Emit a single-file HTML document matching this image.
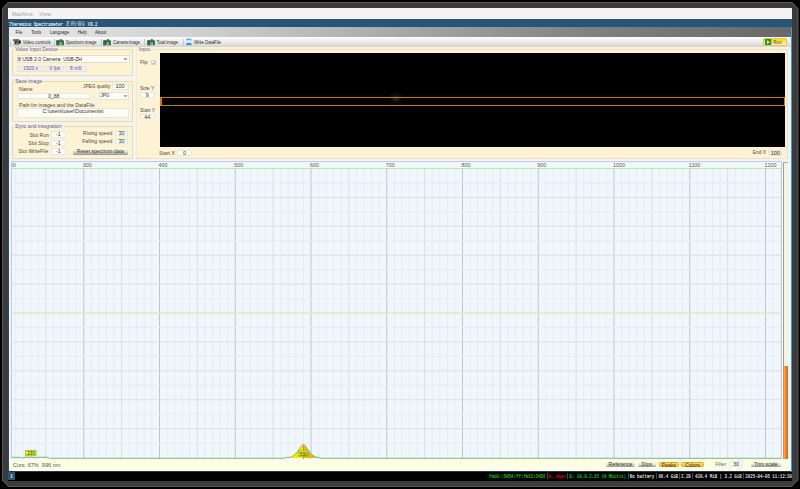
<!DOCTYPE html>
<html><head><meta charset="utf-8">
<style>
*{box-sizing:border-box;margin:0;padding:0}
html,body{width:800px;height:489px;overflow:hidden;background:#000}
body{position:relative;font-family:"Liberation Sans",sans-serif;color:#333}
.a{position:absolute;white-space:nowrap}
.t{position:absolute;white-space:nowrap;line-height:1}
.gb{position:absolute;background:#fdf2d2;border:1px solid #e8dcc0;border-radius:1px}
.gbt{position:absolute;font-size:5.3px;color:#4646a8;background:#fdf2d2;padding:0 1px;line-height:1}
.fld{position:absolute;background:#fffbf0;border:0.6px solid #d8e8e0;font-size:5.3px;color:#333;text-align:center;line-height:1}
.lbl{position:absolute;font-size:5.1px;color:#555;line-height:1;white-space:nowrap}
.btn{position:absolute;border-radius:1.5px;font-size:5.3px;color:#333;text-align:center;line-height:1;white-space:nowrap}
.gbtn{background:linear-gradient(#f6f6ee,#e4e4d8 50%,#c0beb2 80%,#8e8c84);}
.obtn{background:linear-gradient(#ffe070,#ffc030);border:0.7px solid #f0a020}
.sep{position:absolute;width:1px;background:#c8c8c8}
</style></head><body>

<!-- frame -->
<svg class="a" style="left:0;top:0" width="800" height="489">
<polygon points="8,2 792,2 798.5,8.5 798.5,480 791.5,487 8.5,487 2,480.5 2,8.5" fill="#5a5a5a"/>
<polygon points="8.5,3 791.5,3 797.5,9 797.5,479.5 791,486 9,486 3,480 3,9" fill="#3b3b3b"/>
</svg>

<!-- machine bar -->
<div class="a" style="left:8px;top:8px;width:784px;height:11px;background:#f5f4f2"></div>
<div class="t" style="left:11.7px;top:12px;font-size:5.6px;color:#a4a4a4">Machine</div>
<div class="t" style="left:39.3px;top:12px;font-size:5.6px;color:#a4a4a4">View</div>

<!-- title bar -->
<div class="a" style="left:8px;top:19px;width:784px;height:8px;background:#285577"></div>
<div class="t" style="left:9.3px;top:20.6px;font-family:'Liberation Mono';font-size:4.07px;color:#dfe8f0;transform:scaleY(1.35);transform-origin:0 0;-webkit-text-stroke:0.12px #dfe8f0">Theremino Spectrometer <svg style="display:inline-block;vertical-align:-0.3px;margin:0 0.6px 0 0.3px" width="19" height="3.8" viewBox="0 0 19 3.8"><g stroke="#dfe8f0" stroke-width="0.45" fill="none" opacity="0.85">
<path d="M0.3 0.4 H3.3 M0.6 1.2 H3 M0.6 2 H3 M0.3 3.4 H3.4 M1.8 0.2 V3.6 M0.5 2.6 L1 3.2"/>
<path d="M4.2 0.3 L4.8 1.2 M4.3 1.6 H5.3 V3.5 M5.8 0.4 H7.8 V3.5 M5.8 1.8 H7.6 M6.2 0.4 V3.5"/>
<path d="M9.8 0.2 V3.6 M8.5 1.2 L9 2.6 M11.2 1.2 L10.7 2.6 M9.3 3.6 H10"/>
<path d="M12 0.4 H15 M12.4 0.4 V3.6 M13.4 1.2 H14.8 V3 H13.4 Z M13.4 2.1 H14.8 M12 3.6 H15.1"/>
<path d="M15.8 0.4 V3.6 M16.6 0.3 H18.6 M16.6 1.4 H18.4 M17.5 1.4 V3.6 M16.7 2.4 L18.7 3.6 M18.6 2.3 L16.6 3.6"/>
</g></svg> V8.2</div>

<!-- app window -->
<div class="a" style="left:8px;top:27px;width:784px;height:445px;background:#eef4fa"></div>
<div class="a" style="left:8px;top:27px;width:1px;height:445px;background:#1f4d73"></div>
<div class="a" style="left:791px;top:27px;width:1px;height:445px;background:#3d9ae0"></div>

<!-- menu bar -->
<div class="a" style="left:9px;top:27px;width:782px;height:10px;background:linear-gradient(90deg,#e8e8e8 0%,#cfcfcf 25%,#a8a8a8 50%,#808080 75%,#686868 100%)"></div>
<div class="t" style="left:15.5px;top:30.2px;font-size:4.3px;color:#2a2a2a;transform:scaleY(1.22);transform-origin:0 0">File</div>
<div class="t" style="left:31.2px;top:30.2px;font-size:4.3px;color:#2a2a2a;transform:scaleY(1.22);transform-origin:0 0">Tools</div>
<div class="t" style="left:50px;top:30.2px;font-size:4.3px;color:#2a2a2a;transform:scaleY(1.22);transform-origin:0 0">Language</div>
<div class="t" style="left:77.7px;top:30.2px;font-size:4.3px;color:#2a2a2a;transform:scaleY(1.22);transform-origin:0 0">Help</div>
<div class="t" style="left:95px;top:30.2px;font-size:4.3px;color:#2a2a2a;transform:scaleY(1.22);transform-origin:0 0">About</div>

<!-- toolbar -->
<div class="a" style="left:9px;top:37px;width:782px;height:9.5px;background:linear-gradient(#fdfdfd,#e6e6e6 60%,#d4d4d4)"></div>

<!-- toolbar items -->
<div class="sep" style="left:10.3px;top:38.8px;height:6.5px;width:0.8px;background:#cfcfcf"></div>
<svg class="a" style="left:13px;top:38.6px" width="8" height="6" viewBox="0 0 8 6">
 <rect x="0" y="0.2" width="6" height="1.7" fill="#4a4a4a"/>
 <path d="M0.8 0.2 L1.6 1.9 M2.4 0.2 L3.2 1.9 M4 0.2 L4.8 1.9" stroke="#9a9a9a" stroke-width="0.45"/>
 <rect x="1.4" y="1.9" width="4.6" height="3.6" fill="#3a3a3a"/>
 <rect x="2.8" y="3.6" width="2.4" height="1.6" fill="#a89a20"/>
 <rect x="5.3" y="1.6" width="0.6" height="2" fill="#d08080"/>
 <rect x="6" y="1.4" width="1.8" height="3.2" fill="#222"/>
</svg>
<div class="t" style="left:22.7px;top:40.8px;font-size:4.45px;color:#333">Video controls</div>
<div class="sep" style="left:54.2px;top:38.5px;height:7px;width:0.8px"></div>
<svg class="a" style="left:56px;top:38.5px" width="9" height="7" viewBox="0 0 9 7">
 <rect x="0.3" y="1.3" width="7.6" height="5" rx="0.5" fill="#2f6a3e"/>
 <rect x="0.3" y="1.3" width="2.2" height="5" fill="#2a6a55" opacity="0.7"/>
 <rect x="3.8" y="0.3" width="2.2" height="1.3" rx="0.3" fill="#3a5a3a"/>
 <rect x="3.4" y="3.4" width="2.6" height="2.4" fill="#b8c8a8"/>
 <rect x="3.9" y="3.9" width="1.6" height="1.3" fill="#7a9a78"/>
</svg>
<div class="t" style="left:65.7px;top:40.8px;font-size:4.45px;color:#333;letter-spacing:-0.114px">Spectrum image</div>
<div class="sep" style="left:100.5px;top:38.5px;height:7px;width:0.8px"></div>
<svg class="a" style="left:103px;top:38.5px" width="9" height="7" viewBox="0 0 9 7">
 <rect x="0.3" y="1.3" width="7.6" height="5" rx="0.5" fill="#2f6a3e"/>
 <rect x="0.3" y="1.3" width="2.2" height="5" fill="#2a6a55" opacity="0.7"/>
 <rect x="3.8" y="0.3" width="2.2" height="1.3" rx="0.3" fill="#3a5a3a"/>
 <rect x="3.4" y="3.4" width="2.6" height="2.4" fill="#b8c8a8"/>
 <rect x="3.9" y="3.9" width="1.6" height="1.3" fill="#7a9a78"/>
</svg>
<div class="t" style="left:113px;top:40.8px;font-size:4.45px;color:#333;letter-spacing:-0.198px">Camera image</div>
<div class="sep" style="left:143.5px;top:38.5px;height:7px;width:0.8px"></div>
<svg class="a" style="left:146.8px;top:38.5px" width="9" height="7" viewBox="0 0 9 7">
 <rect x="0.3" y="1.3" width="7.6" height="5" rx="0.5" fill="#2f6a3e"/>
 <rect x="0.3" y="1.3" width="2.2" height="5" fill="#2a6a55" opacity="0.7"/>
 <rect x="3.8" y="0.3" width="2.2" height="1.3" rx="0.3" fill="#3a5a3a"/>
 <rect x="3.4" y="3.4" width="2.6" height="2.4" fill="#b8c8a8"/>
 <rect x="3.9" y="3.9" width="1.6" height="1.3" fill="#7a9a78"/>
</svg>
<div class="t" style="left:156.5px;top:40.8px;font-size:4.45px;color:#333;letter-spacing:-0.114px">Total image</div>
<div class="sep" style="left:183px;top:38.5px;height:7px;width:0.8px"></div>
<svg class="a" style="left:185.5px;top:38px" width="6" height="8" viewBox="0 0 6 8">
 <rect x="0.4" y="1" width="5" height="6" fill="#d8ecf8"/>
 <path d="M0.3 0.8 Q2.8 -0.2 5.5 1 L5.5 2.4 Q2.8 1.6 0.3 2.6Z" fill="#5ab4e8"/>
 <path d="M0.3 5.2 Q2.8 4.4 5.5 5.4 L5.5 7.3 Q2.8 6.6 0.3 7.2Z" fill="#3c8cd0"/>
</svg>
<div class="t" style="left:194px;top:40.8px;font-size:4.45px;color:#333;letter-spacing:-0.079px">Write DataFile</div>

<!-- Run button -->
<div class="a" style="left:763px;top:37.5px;width:24px;height:8.7px;border:0.7px solid #f0c060;border-radius:1px;background:linear-gradient(#ffd800,#ffe860 55%,#fff6c8)"></div>
<svg class="a" style="left:765px;top:38.8px" width="6.5" height="6.5" viewBox="0 0 6.5 6.5">
 <rect x="0" y="0" width="6.3" height="6.3" fill="#1a9a2a"/>
 <path d="M2 1.2 L5 3.15 L2 5.1Z" fill="#e8ffe8"/>
</svg>
<div class="t" style="left:773.3px;top:40.6px;font-size:4.6px;color:#444">Run</div>


<!-- panels -->
<div class="a" style="left:132.7px;top:46.5px;width:2.6px;height:113px;background:#eef6fc"></div>
<div class="a" style="left:11.30px;top:46.60px;width:121.40px;height:29.00px;background:#fdf2d3"></div>
<div class="a" style="left:11.50px;top:48.80px;width:121.20px;height:26.80px;border:0.8px solid #e3dac4"></div>
<div class="a" style="left:14.20px;top:47.30px;width:44.80px;height:4px;background:#fdf2d3"></div>
<div class="t" style="left:15.20px;top:47.05px;font-size:5.1px;color:#5252aa;">Video Input Device</div>
<div class="a" style="left:16.50px;top:54.50px;width:113.00px;height:8.80px;background:#fffcf5;border:0.5px solid #e6dfcc"></div>
<div class="t" style="left:18.00px;top:56.58px;font-size:5.05px;color:#2a2a2a;">8 USB 2.0 Camera: USB-ZH</div>
<svg class="a" style="left:122.8px;top:57.6px" width="5" height="3"><path d="M0.3 0.3 L4.5 0.3 L2.4 2.6Z" fill="#8a8a8a"/></svg>
<div class="a" style="left:16.50px;top:66.00px;width:28.40px;height:5.80px;background:#efefeb;border:0.5px solid #e4e4de"></div>
<div class="t" style="left:16.50px;width:28.40px;text-align:center;top:66.65px;font-size:4.9px;color:#5050b0;">1920 x</div>
<div class="a" style="left:46.20px;top:66.00px;width:17.40px;height:5.80px;background:#efefeb;border:0.5px solid #e4e4de"></div>
<div class="t" style="left:46.20px;width:17.40px;text-align:center;top:66.65px;font-size:4.9px;color:#5050b0;">0 fps</div>
<div class="a" style="left:64.80px;top:66.00px;width:22.00px;height:5.80px;background:#efefeb;border:0.5px solid #e4e4de"></div>
<div class="t" style="left:64.80px;width:22.00px;text-align:center;top:66.65px;font-size:4.9px;color:#5050b0;">8 mS</div>
<div class="a" style="left:11.30px;top:78.55px;width:121.40px;height:42.95px;background:#fdf2d3"></div>
<div class="a" style="left:11.50px;top:80.75px;width:121.20px;height:40.75px;border:0.8px solid #e3dac4"></div>
<div class="a" style="left:14.20px;top:79.25px;width:28.80px;height:4px;background:#fdf2d3"></div>
<div class="t" style="left:15.20px;top:78.95px;font-size:5.1px;color:#5252aa;">Save image</div>
<div class="t" style="left:19.00px;top:87.07px;font-size:5.05px;color:#4a4a4a;">Name</div>
<div class="t" style="left:83.00px;top:84.53px;font-size:4.75px;color:#4a4a4a;">JPEG quality</div>
<div class="a" style="left:111.50px;top:83.25px;width:17.00px;height:6.95px;background:#fffbf2;border:0.5px solid #d9ecec"></div>
<div class="t" style="left:111.50px;width:17.00px;text-align:center;top:84.05px;font-size:5.5px;color:#333;">100</div>
<div class="a" style="left:16.50px;top:93.00px;width:74.50px;height:5.50px;background:#fffbf2;border:0.5px solid #d9ecec"></div>
<div class="t" style="left:16.50px;width:74.50px;text-align:center;top:93.38px;font-size:5.05px;color:#333;margin-top:0.4px">0_88</div>
<div class="t" style="left:94.00px;top:93.67px;font-size:5.05px;color:#444;">.</div>
<div class="a" style="left:99.30px;top:91.80px;width:29.70px;height:8.40px;background:#fffcf5;border:0.5px solid #d6e8e4"></div>
<div class="t" style="left:100.50px;top:93.70px;font-size:4.6px;color:#333;">JPG</div>
<svg class="a" style="left:122.6px;top:95px" width="5" height="3"><path d="M0.3 0.3 L4.6 0.3 L2.45 2.6Z" fill="#9a9a9a"/></svg>
<div class="t" style="left:19.00px;top:102.61px;font-size:5.18px;color:#4a4a4a;">Path for images and the DataFile</div>
<div class="a" style="left:17.00px;top:107.50px;width:112.00px;height:10.20px;background:#fffbf2;border:0.5px solid #d9ecec"></div>
<div class="t" style="left:17.00px;width:112.00px;text-align:center;top:108.95px;font-size:5.3px;color:#333;">C:\users\user\Documents\</div>
<div class="a" style="left:11.30px;top:123.80px;width:121.40px;height:35.10px;background:#fdf2d3"></div>
<div class="a" style="left:11.50px;top:126.00px;width:121.20px;height:32.90px;border:0.8px solid #e3dac4"></div>
<div class="a" style="left:14.10px;top:124.50px;width:50.00px;height:4px;background:#fdf2d3"></div>
<div class="t" style="left:15.10px;top:123.75px;font-size:5.1px;color:#5252aa;">Sync and integration</div>
<div class="t" style="left:-11.25px;width:60px;text-align:right;top:132.57px;font-size:5.05px;color:#4a4a4a;">Slot Run</div>
<div class="t" style="left:-11.25px;width:60px;text-align:right;top:140.88px;font-size:5.05px;color:#4a4a4a;">Slot Stop</div>
<div class="t" style="left:-11.80px;width:60px;text-align:right;top:148.72px;font-size:5.05px;color:#4a4a4a;">Slot WriteFile</div>
<div class="a" style="left:51.00px;top:131.40px;width:14.60px;height:6.70px;background:#fffbf2;border:0.5px solid #d9ecec"></div>
<div class="t" style="left:51.00px;width:14.60px;text-align:center;top:132.15px;font-size:5.4px;color:#333;">-1</div>
<div class="a" style="left:51.00px;top:140.00px;width:14.60px;height:6.40px;background:#fffbf2;border:0.5px solid #d9ecec"></div>
<div class="t" style="left:51.00px;width:14.60px;text-align:center;top:140.60px;font-size:5.4px;color:#333;">-1</div>
<div class="a" style="left:51.00px;top:148.25px;width:14.60px;height:6.35px;background:#fffbf2;border:0.5px solid #d9ecec"></div>
<div class="t" style="left:51.00px;width:14.60px;text-align:center;top:148.83px;font-size:5.4px;color:#333;">-1</div>
<div class="t" style="left:52.30px;width:60px;text-align:right;top:130.78px;font-size:5.05px;color:#4a4a4a;">Rising speed</div>
<div class="t" style="left:52.30px;width:60px;text-align:right;top:138.88px;font-size:5.05px;color:#4a4a4a;">Falling speed</div>
<div class="a" style="left:115.10px;top:130.50px;width:12.60px;height:5.70px;background:#fffbf2;border:0.5px solid #d9ecec"></div>
<div class="t" style="left:115.10px;width:12.60px;text-align:center;top:130.75px;font-size:5.4px;color:#333;">30</div>
<div class="a" style="left:115.10px;top:138.60px;width:12.60px;height:5.70px;background:#fffbf2;border:0.5px solid #d9ecec"></div>
<div class="t" style="left:115.10px;width:12.60px;text-align:center;top:138.85px;font-size:5.4px;color:#333;">30</div>
<div class="a" style="left:72.85px;top:148.4px;width:54.85px;height:6.5px;border-radius:1.2px;background:linear-gradient(#fbfbe8,#e8e8d4 45%,#b8b6a8 80%,#8e8c82)"></div>
<div class="t" style="left:72.85px;width:54.85px;text-align:center;top:148.75px;font-size:5.1px;color:#333;">Reset spectrum data</div>
<div class="a" style="left:135.3px;top:46.5px;width:652.8px;height:112.3px;background:#fdf2d3"></div>
<div class="a" style="left:135.5px;top:49.1px;width:652.4px;height:109.7px;border:0.8px solid #ebe1c8;border-left-color:#f4ead0"></div>
<div class="a" style="left:138px;top:47.3px;width:13px;height:4px;background:#fdf2d3"></div>
<div class="t" style="left:139.00px;top:48.12px;font-size:4.95px;color:#5252aa;">Input</div>
<div class="t" style="left:140.00px;top:61.05px;font-size:4.7px;color:#4a4a4a;">Flip</div>
<div class="a" style="left:151px;top:59.5px;width:5.2px;height:5.2px;background:#f6f6f2;border:0.5px solid #d6d6ce"></div>
<svg class="a" style="left:151px;top:59.5px" width="6" height="6"><path d="M1.3 2.9 L2.4 4.1 L4.4 1.3" stroke="#777" stroke-width="0.6" fill="none"/></svg>
<div class="t" style="left:140.00px;top:86.73px;font-size:4.95px;color:#4a4a4a;">Size Y</div>
<div class="a" style="left:140.00px;top:92.00px;width:14.60px;height:5.60px;background:#fffbf2;border:0.5px solid #d9ecec"></div>
<div class="t" style="left:140.00px;width:14.60px;text-align:center;top:93.25px;font-size:5.3px;color:#333;">9</div>
<div class="t" style="left:140.00px;top:108.93px;font-size:4.95px;color:#4a4a4a;">Start Y</div>
<div class="a" style="left:140.00px;top:114.00px;width:14.60px;height:5.20px;background:#fffbf2;border:0.5px solid #d9ecec"></div>
<div class="t" style="left:140.00px;width:14.60px;text-align:center;top:114.95px;font-size:5.3px;color:#333;">44</div>
<div class="t" style="left:159.10px;top:150.70px;font-size:5.2px;color:#4a4a4a;">Start X</div>
<div class="a" style="left:177.20px;top:150.00px;width:14.40px;height:6.20px;background:#fffbf2;border:0.5px solid #d9ecec"></div>
<div class="t" style="left:177.20px;width:14.40px;text-align:center;top:150.60px;font-size:5.4px;color:#444;">0</div>
<div class="t" style="left:752.80px;top:150.67px;font-size:4.85px;color:#4a4a4a;">End X</div>
<div class="a" style="left:768.10px;top:150.00px;width:14.40px;height:6.25px;background:#fde6c4;border:0.5px solid #dde8e0"></div>
<div class="t" style="left:768.10px;width:14.40px;text-align:center;top:151.15px;font-size:5.5px;color:#333;">100</div>
<div class="a" style="left:159.6px;top:52.8px;width:625.4px;height:94.2px;background:#000;overflow:hidden">
  <div class="a" style="left:226.4px;top:38.2px;width:20px;height:15px;background:radial-gradient(ellipse at center,rgba(60,70,62,0.7) 0%,rgba(30,35,30,0.3) 35%,rgba(0,0,0,0) 70%)"></div>
  <div class="a" style="left:0.3px;top:44.1px;width:625px;height:9.3px;border:1.4px solid #d07800;border-left-width:2px"></div>
</div>
<!-- /panels -->












<!-- chart -->
<svg class="a" style="left:0;top:0" width="800" height="489">
<rect x="11" y="161" width="771" height="298" fill="#eff6fd"/>
<rect x="11" y="161" width="771" height="1" fill="#c8ccd2"/>
<rect x="11" y="161" width="1" height="298" fill="#c8ccd2"/>
<rect x="781" y="161" width="1" height="298" fill="#c8ccd2"/>
<defs><clipPath id="cp"><rect x="12" y="162" width="769" height="297"/></clipPath></defs>
<g clip-path="url(#cp)">
<rect x="7.50" y="168" width="1" height="291" fill="#c2c5ca"/>
<rect x="15.08" y="168" width="1" height="291" fill="#e9ecef"/>
<rect x="22.65" y="168" width="1" height="291" fill="#e9ecef"/>
<rect x="30.22" y="168" width="1" height="291" fill="#e9ecef"/>
<rect x="37.80" y="168" width="1" height="291" fill="#e9ecef"/>
<rect x="45.38" y="168" width="1" height="291" fill="#dcdfe3"/>
<rect x="52.95" y="168" width="1" height="291" fill="#e9ecef"/>
<rect x="60.53" y="168" width="1" height="291" fill="#e9ecef"/>
<rect x="68.10" y="168" width="1" height="291" fill="#e9ecef"/>
<rect x="75.68" y="168" width="1" height="291" fill="#e9ecef"/>
<rect x="83.25" y="168" width="1" height="291" fill="#c2c5ca"/>
<rect x="90.83" y="168" width="1" height="291" fill="#e9ecef"/>
<rect x="98.40" y="168" width="1" height="291" fill="#e9ecef"/>
<rect x="105.97" y="168" width="1" height="291" fill="#e9ecef"/>
<rect x="113.55" y="168" width="1" height="291" fill="#e9ecef"/>
<rect x="121.12" y="168" width="1" height="291" fill="#dcdfe3"/>
<rect x="128.70" y="168" width="1" height="291" fill="#e9ecef"/>
<rect x="136.28" y="168" width="1" height="291" fill="#e9ecef"/>
<rect x="143.85" y="168" width="1" height="291" fill="#e9ecef"/>
<rect x="151.43" y="168" width="1" height="291" fill="#e9ecef"/>
<rect x="159.00" y="168" width="1" height="291" fill="#c2c5ca"/>
<rect x="166.57" y="168" width="1" height="291" fill="#e9ecef"/>
<rect x="174.15" y="168" width="1" height="291" fill="#e9ecef"/>
<rect x="181.72" y="168" width="1" height="291" fill="#e9ecef"/>
<rect x="189.30" y="168" width="1" height="291" fill="#e9ecef"/>
<rect x="196.88" y="168" width="1" height="291" fill="#dcdfe3"/>
<rect x="204.45" y="168" width="1" height="291" fill="#e9ecef"/>
<rect x="212.03" y="168" width="1" height="291" fill="#e9ecef"/>
<rect x="219.60" y="168" width="1" height="291" fill="#e9ecef"/>
<rect x="227.18" y="168" width="1" height="291" fill="#e9ecef"/>
<rect x="234.75" y="168" width="1" height="291" fill="#c2c5ca"/>
<rect x="242.32" y="168" width="1" height="291" fill="#e9ecef"/>
<rect x="249.90" y="168" width="1" height="291" fill="#e9ecef"/>
<rect x="257.48" y="168" width="1" height="291" fill="#e9ecef"/>
<rect x="265.05" y="168" width="1" height="291" fill="#e9ecef"/>
<rect x="272.62" y="168" width="1" height="291" fill="#dcdfe3"/>
<rect x="280.20" y="168" width="1" height="291" fill="#e9ecef"/>
<rect x="287.77" y="168" width="1" height="291" fill="#e9ecef"/>
<rect x="295.35" y="168" width="1" height="291" fill="#e9ecef"/>
<rect x="302.92" y="168" width="1" height="291" fill="#e9ecef"/>
<rect x="310.50" y="168" width="1" height="291" fill="#c2c5ca"/>
<rect x="318.07" y="168" width="1" height="291" fill="#e9ecef"/>
<rect x="325.65" y="168" width="1" height="291" fill="#e9ecef"/>
<rect x="333.23" y="168" width="1" height="291" fill="#e9ecef"/>
<rect x="340.80" y="168" width="1" height="291" fill="#e9ecef"/>
<rect x="348.38" y="168" width="1" height="291" fill="#dcdfe3"/>
<rect x="355.95" y="168" width="1" height="291" fill="#e9ecef"/>
<rect x="363.52" y="168" width="1" height="291" fill="#e9ecef"/>
<rect x="371.10" y="168" width="1" height="291" fill="#e9ecef"/>
<rect x="378.67" y="168" width="1" height="291" fill="#e9ecef"/>
<rect x="386.25" y="168" width="1" height="291" fill="#c2c5ca"/>
<rect x="393.82" y="168" width="1" height="291" fill="#e9ecef"/>
<rect x="401.40" y="168" width="1" height="291" fill="#e9ecef"/>
<rect x="408.98" y="168" width="1" height="291" fill="#e9ecef"/>
<rect x="416.55" y="168" width="1" height="291" fill="#e9ecef"/>
<rect x="424.12" y="168" width="1" height="291" fill="#dcdfe3"/>
<rect x="431.70" y="168" width="1" height="291" fill="#e9ecef"/>
<rect x="439.27" y="168" width="1" height="291" fill="#e9ecef"/>
<rect x="446.85" y="168" width="1" height="291" fill="#e9ecef"/>
<rect x="454.42" y="168" width="1" height="291" fill="#e9ecef"/>
<rect x="462.00" y="168" width="1" height="291" fill="#c2c5ca"/>
<rect x="469.57" y="168" width="1" height="291" fill="#e9ecef"/>
<rect x="477.15" y="168" width="1" height="291" fill="#e9ecef"/>
<rect x="484.72" y="168" width="1" height="291" fill="#e9ecef"/>
<rect x="492.30" y="168" width="1" height="291" fill="#e9ecef"/>
<rect x="499.88" y="168" width="1" height="291" fill="#dcdfe3"/>
<rect x="507.45" y="168" width="1" height="291" fill="#e9ecef"/>
<rect x="515.02" y="168" width="1" height="291" fill="#e9ecef"/>
<rect x="522.60" y="168" width="1" height="291" fill="#e9ecef"/>
<rect x="530.17" y="168" width="1" height="291" fill="#e9ecef"/>
<rect x="537.75" y="168" width="1" height="291" fill="#c2c5ca"/>
<rect x="545.33" y="168" width="1" height="291" fill="#e9ecef"/>
<rect x="552.90" y="168" width="1" height="291" fill="#e9ecef"/>
<rect x="560.47" y="168" width="1" height="291" fill="#e9ecef"/>
<rect x="568.05" y="168" width="1" height="291" fill="#e9ecef"/>
<rect x="575.62" y="168" width="1" height="291" fill="#dcdfe3"/>
<rect x="583.20" y="168" width="1" height="291" fill="#e9ecef"/>
<rect x="590.77" y="168" width="1" height="291" fill="#e9ecef"/>
<rect x="598.35" y="168" width="1" height="291" fill="#e9ecef"/>
<rect x="605.92" y="168" width="1" height="291" fill="#e9ecef"/>
<rect x="613.50" y="168" width="1" height="291" fill="#c2c5ca"/>
<rect x="621.08" y="168" width="1" height="291" fill="#e9ecef"/>
<rect x="628.65" y="168" width="1" height="291" fill="#e9ecef"/>
<rect x="636.22" y="168" width="1" height="291" fill="#e9ecef"/>
<rect x="643.80" y="168" width="1" height="291" fill="#e9ecef"/>
<rect x="651.38" y="168" width="1" height="291" fill="#dcdfe3"/>
<rect x="658.95" y="168" width="1" height="291" fill="#e9ecef"/>
<rect x="666.52" y="168" width="1" height="291" fill="#e9ecef"/>
<rect x="674.10" y="168" width="1" height="291" fill="#e9ecef"/>
<rect x="681.67" y="168" width="1" height="291" fill="#e9ecef"/>
<rect x="689.25" y="168" width="1" height="291" fill="#c2c5ca"/>
<rect x="696.82" y="168" width="1" height="291" fill="#e9ecef"/>
<rect x="704.40" y="168" width="1" height="291" fill="#e9ecef"/>
<rect x="711.97" y="168" width="1" height="291" fill="#e9ecef"/>
<rect x="719.55" y="168" width="1" height="291" fill="#e9ecef"/>
<rect x="727.12" y="168" width="1" height="291" fill="#dcdfe3"/>
<rect x="734.70" y="168" width="1" height="291" fill="#e9ecef"/>
<rect x="742.27" y="168" width="1" height="291" fill="#e9ecef"/>
<rect x="749.85" y="168" width="1" height="291" fill="#e9ecef"/>
<rect x="757.42" y="168" width="1" height="291" fill="#e9ecef"/>
<rect x="765.00" y="168" width="1" height="291" fill="#c2c5ca"/>
<rect x="772.57" y="168" width="1" height="291" fill="#e9ecef"/>
<rect x="780.15" y="168" width="1" height="291" fill="#e9ecef"/>
<rect x="787.72" y="168" width="1" height="291" fill="#e9ecef"/>
<rect x="11" y="182.46" width="771" height="1" fill="#e8eaed"/>
<rect x="11" y="196.91" width="771" height="1" fill="#dcdfe3"/>
<rect x="11" y="211.37" width="771" height="1" fill="#e8eaed"/>
<rect x="11" y="225.82" width="771" height="1" fill="#dcdfe3"/>
<rect x="11" y="240.28" width="771" height="1" fill="#e8eaed"/>
<rect x="11" y="254.73" width="771" height="1" fill="#dcdfe3"/>
<rect x="11" y="269.19" width="771" height="1" fill="#e8eaed"/>
<rect x="11" y="283.64" width="771" height="1" fill="#dcdfe3"/>
<rect x="11" y="298.10" width="771" height="1" fill="#e8eaed"/>
<rect x="11" y="312.35" width="771" height="1.4" fill="#d8ecc8"/>
<rect x="11" y="327.00" width="771" height="1" fill="#e8eaed"/>
<rect x="11" y="341.46" width="771" height="1" fill="#dcdfe3"/>
<rect x="11" y="355.91" width="771" height="1" fill="#e8eaed"/>
<rect x="11" y="370.37" width="771" height="1" fill="#dcdfe3"/>
<rect x="11" y="384.82" width="771" height="1" fill="#e8eaed"/>
<rect x="11" y="399.28" width="771" height="1" fill="#dcdfe3"/>
<rect x="11" y="413.74" width="771" height="1" fill="#e8eaed"/>
<rect x="11" y="428.19" width="771" height="1" fill="#dcdfe3"/>
<rect x="11" y="442.64" width="771" height="1" fill="#e8eaed"/>
<rect x="11" y="168" width="771" height="1" fill="#c6e3a4"/>
<text x="7.10" y="166.9" font-family="Liberation Sans" font-size="5.3" fill="#5a5a5a">200</text>
<text x="82.85" y="166.9" font-family="Liberation Sans" font-size="5.3" fill="#5a5a5a">300</text>
<text x="158.60" y="166.9" font-family="Liberation Sans" font-size="5.3" fill="#5a5a5a">400</text>
<text x="234.35" y="166.9" font-family="Liberation Sans" font-size="5.3" fill="#5a5a5a">500</text>
<text x="310.10" y="166.9" font-family="Liberation Sans" font-size="5.3" fill="#5a5a5a">600</text>
<text x="385.85" y="166.9" font-family="Liberation Sans" font-size="5.3" fill="#5a5a5a">700</text>
<text x="461.60" y="166.9" font-family="Liberation Sans" font-size="5.3" fill="#5a5a5a">800</text>
<text x="537.35" y="166.9" font-family="Liberation Sans" font-size="5.3" fill="#5a5a5a">900</text>
<text x="613.10" y="166.9" font-family="Liberation Sans" font-size="5.3" fill="#5a5a5a">1000</text>
<text x="688.85" y="166.9" font-family="Liberation Sans" font-size="5.3" fill="#5a5a5a">1100</text>
<text x="764.60" y="166.9" font-family="Liberation Sans" font-size="5.3" fill="#5a5a5a">1200</text>
</g>
</svg>
<!-- /chart -->

<!-- data -->
<svg class="a" style="left:0;top:0" width="800" height="489">
 <defs>
  <linearGradient id="pk" x1="0" x2="1" y1="0" y2="0">
   <stop offset="0" stop-color="#f0f000"/><stop offset="0.49" stop-color="#ffe400"/><stop offset="0.51" stop-color="#ffb800"/><stop offset="1" stop-color="#ffa000"/>
  </linearGradient>
 </defs>
 <path d="M287.5 458 C291.5 457.6 294.5 455.5 297.3 452 C299.8 448.6 301.8 444.6 303.4 444.4 C305 444.6 307 448.6 309.5 452 C312.3 455.5 315.3 457.6 319.3 458 Z" fill="url(#pk)"/>
 <path d="M12 457.3 L20 457.4 L22.5 458 L25 457.3 L33 457.3 L35 457.9 L37 457.3 L47 457.2 L49.5 458.3 L284 458.3 L285.5 457.4 L288 457.6 C291.5 457.5 294.5 455.5 297.3 452 C299.8 448.6 301.8 444.6 303.4 444.4 C305 444.6 307 448.6 309.5 452 C312.3 455.5 315.3 457.5 319 457.5 L321 458.3 L781 458.3" fill="none" stroke="#74be74" stroke-width="1"/>
 <line x1="303.4" y1="445.5" x2="303.4" y2="459" stroke="#ff5a00" stroke-width="0.7"/>
 <rect x="25.6" y="450.3" width="10.4" height="5.5" fill="#f2f200" stroke="#66bb55" stroke-width="0.7"/>
 <text x="26.9" y="455.1" font-family="Liberation Sans" font-size="4.9" fill="#333">230</text>
 <rect x="298.3" y="450.8" width="10.3" height="5.4" fill="#f2f000" stroke="#66bb55" stroke-width="0.7"/>
 <text x="299.5" y="455.5" font-family="Liberation Sans" font-size="4.9" fill="#333">590</text>
</svg>

<!-- right slider -->
<div class="a" style="left:783px;top:161.5px;width:5px;height:297.5px;background:#f4f4dc;border-left:1px solid #a0a0a0;border-top:1px solid #b0b0a8"></div>
<div class="a" style="left:784px;top:366px;width:4px;height:93px;background:linear-gradient(90deg,#ffb060,#ff7a00 50%,#f06800)"></div>

<!-- status bar -->
<div class="a" style="left:9px;top:459.3px;width:782px;height:11.8px;background:#fdfde6"></div>
<div class="a" style="left:9px;top:471px;width:782px;height:1px;background:#1c3a55"></div>
<div class="t" style="left:12.9px;top:462.8px;font-size:5.55px;color:#555">Curs: 67%&nbsp; 996 nm</div>
<div class="btn gbtn" style="left:606px;top:461.9px;width:29px;height:5.4px;font-size:5.2px;padding-top:0.2px">Reference</div>
<div class="btn gbtn" style="left:638px;top:461.9px;width:17.6px;height:5.4px;font-size:5.2px;padding-top:0.2px">Dips</div>
<div class="btn obtn" style="left:658.7px;top:461.7px;width:20px;height:5.8px;font-size:5.2px;padding-top:0.2px">Peaks</div>
<div class="btn obtn" style="left:681.2px;top:461.7px;width:22.5px;height:5.8px;font-size:5.2px;padding-top:0.2px">Colors</div>
<div class="lbl" style="left:715.2px;top:462.2px;font-size:5px;color:#666">Filter</div>
<div class="a" style="left:729.2px;top:460.5px;width:13.8px;height:6.3px;background:#fbfdf8;border:0.5px solid #dcecec"></div><div class="t" style="left:729.2px;width:13.8px;text-align:center;top:461.6px;font-size:5.5px;color:#333">30</div>
<div class="btn gbtn" style="left:750.8px;top:461.6px;width:30px;height:5.6px;font-size:5.2px;padding-top:0.2px">Trim scale</div>

<!-- i3bar -->
<div class="a" style="left:8px;top:472px;width:784px;height:8.6px;background:#000;overflow:hidden">
 <div class="a" style="left:0.2px;top:0.3px;width:6.6px;height:8px;background:#285577"></div>
 <div class="t" style="left:2.2px;top:1.9px;font-family:'Liberation Mono';font-size:4.2px;font-weight:bold;color:#e8eef4;transform:scaleY(1.3);transform-origin:0 0">1</div>
 <div class="t" style="left:481px;top:1.9px;font-family:'Liberation Mono';font-size:4.1px;-webkit-text-stroke:0.15px currentColor;transform:scaleY(1.3);transform-origin:0 0;color:#00c000">fec0::5054:ff:fe12:3456</div>
 <div class="a" style="left:539.2px;top:1.2px;width:0.8px;height:6.2px;background:#444"></div>
 <div class="t" style="left:540.2px;top:1.9px;font-family:'Liberation Mono';font-size:4.1px;-webkit-text-stroke:0.15px currentColor;transform:scaleY(1.3);transform-origin:0 0;color:#d00000">W: down</div>
 <div class="a" style="left:559.4px;top:1.2px;width:0.8px;height:6.2px;background:#444"></div>
 <div class="t" style="left:561.5px;top:1.9px;font-family:'Liberation Mono';font-size:4.1px;-webkit-text-stroke:0.15px currentColor;transform:scaleY(1.3);transform-origin:0 0;color:#00c000">E: 10.0.2.15 (0 Mbit/s)</div>
 <div class="a" style="left:620px;top:1.2px;width:0.8px;height:6.2px;background:#444"></div>
 <div class="t" style="left:621.7px;top:1.9px;font-family:'Liberation Mono';font-size:4.1px;-webkit-text-stroke:0.15px currentColor;transform:scaleY(1.3);transform-origin:0 0;color:#d8d8d8">No battery</div>
 <div class="a" style="left:648px;top:1.2px;width:0.8px;height:6.2px;background:#444"></div>
 <div class="t" style="left:650.4px;top:1.9px;font-family:'Liberation Mono';font-size:4.1px;-webkit-text-stroke:0.15px currentColor;transform:scaleY(1.3);transform-origin:0 0;color:#d8d8d8">86.4 GiB</div>
 <div class="a" style="left:671px;top:1.2px;width:0.8px;height:6.2px;background:#444"></div>
 <div class="t" style="left:673px;top:1.9px;font-family:'Liberation Mono';font-size:4.1px;-webkit-text-stroke:0.15px currentColor;transform:scaleY(1.3);transform-origin:0 0;color:#d8d8d8">2.29</div>
 <div class="a" style="left:684px;top:1.2px;width:0.8px;height:6.2px;background:#444"></div>
 <div class="t" style="left:687px;top:1.9px;font-family:'Liberation Mono';font-size:4.1px;-webkit-text-stroke:0.15px currentColor;transform:scaleY(1.3);transform-origin:0 0;color:#d8d8d8">420.4 MiB | 3.2 GiB</div>
 <div class="a" style="left:735px;top:1.2px;width:0.8px;height:6.2px;background:#444"></div>
 <div class="t" style="left:737.3px;top:1.9px;font-family:'Liberation Mono';font-size:4.1px;-webkit-text-stroke:0.15px currentColor;transform:scaleY(1.3);transform-origin:0 0;color:#d8d8d8">2025-04-05 11:12:30</div>
</div>

</body></html>
